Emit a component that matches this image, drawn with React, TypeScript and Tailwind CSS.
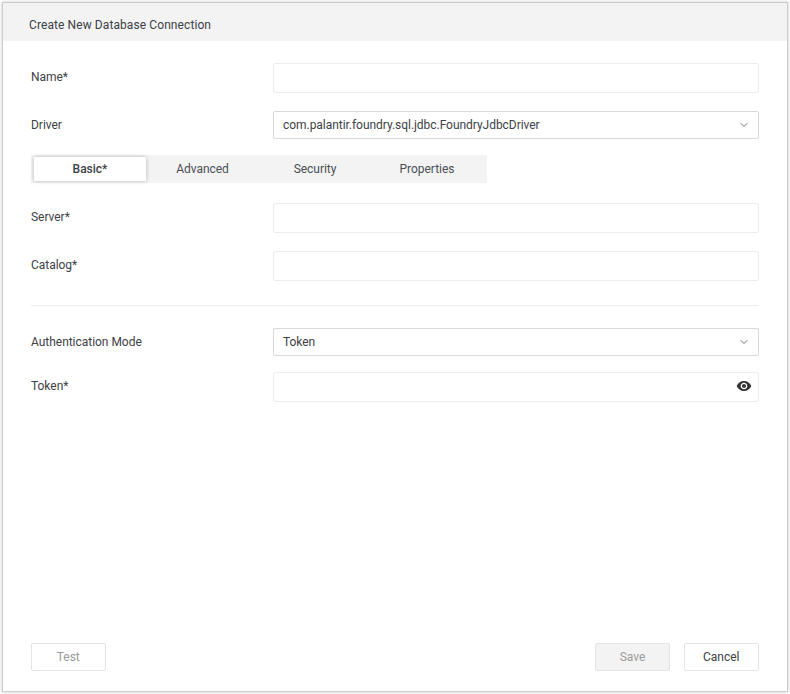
import { ChevronDown } from "lucide-react";

const font = "font-['Roboto','Liberation_Sans',sans-serif]";

function Label({ children, raised = false }: { children: React.ReactNode; raised?: boolean }) {
  return (
    <div className={`w-[242px] shrink-0 text-[12px] leading-[16px] tracking-[-0.03px] text-[#3c4146] ${raised ? "pb-[2px]" : ""}`}>
      {children}
    </div>
  );
}

function TextRow({ label, className = "", icon = false }: { label: string; className?: string; icon?: boolean }) {
  return (
    <div className={`flex items-center ${className}`}>
      <Label raised>{label}</Label>
      <div className="flex h-[30px] flex-1 items-center justify-end rounded-[2px] border border-[#ececec] bg-white pb-[2px] pr-[6px]">
        {icon && (
          <svg width="16" height="16" viewBox="0 0 24 24" fill="#333">
            <path d="M12 4.5C7 4.5 2.73 7.61 1 12c1.73 4.39 6 7.5 11 7.5s9.27-3.11 11-7.5c-1.73-4.39-6-7.5-11-7.5zM12 17c-2.76 0-5-2.24-5-5s2.24-5 5-5 5 2.24 5 5-2.24 5-5 5zm0-8c-1.66 0-3 1.34-3 3s1.34 3 3 3 3-1.34 3-3-1.34-3-3-3z" />
          </svg>
        )}
      </div>
    </div>
  );
}

function SelectRow({ label, value, className = "" }: { label: string; value: string; className?: string }) {
  return (
    <div className={`flex items-center ${className}`}>
      <Label>{label}</Label>
      <div className="flex h-[28px] flex-1 items-center justify-between rounded-[2px] border border-[#d9d9d9] bg-white pl-[9px] pr-[8px] text-[12px] tracking-[-0.04px] text-[#3c4146]">
        <span>{value}</span>
        <ChevronDown size={12} strokeWidth={2} className="text-[#6f6f6f]" />
      </div>
    </div>
  );
}

function Tab({ children, active = false, wide = false }: { children: React.ReactNode; active?: boolean; wide?: boolean }) {
  return (
    <div
      className={
        active
          ? "flex h-[24px] w-[112px] items-center justify-center rounded-[1px] bg-white text-[12px] font-medium text-[#3c4146] shadow-[0_0_4px_rgba(0,0,0,0.25)]"
          : `flex h-[24px] ${wide ? "w-[113px]" : "w-[112px]"} items-center justify-center text-[12px] tracking-[-0.03px] text-[#4a4f55]`
      }
    >
      {children}
    </div>
  );
}

export default function App() {
  return (
    <div className={`h-[694px] w-[790px] bg-[#fdfdfd] pl-[3px] pt-[3px] ${font}`}>
      <div className="flex h-[688px] w-[784px] flex-col bg-white shadow-[0_0_0_1px_#cccccc,0_0_3px_1px_rgba(0,0,0,0.2)]">
        <div className="flex h-[38px] shrink-0 items-center bg-[#f3f3f3] pl-[26px] pt-[5px] text-[12px] tracking-[0.09px] text-[#3c4146]">
          Create New Database Connection
        </div>
        <div className="flex flex-1 flex-col pl-[28px] pr-[28.5px]">
          <TextRow label="Name*" className="mt-[22px]" />
          <SelectRow label="Driver" value="com.palantir.foundry.sql.jdbc.FoundryJdbcDriver" className="mt-[18px]" />
          <div className="mt-[16px] flex h-[28px] w-[456px] items-center bg-[#f3f3f3] pl-[3px]">
            <Tab active>Basic*</Tab>
            <Tab wide>Advanced</Tab>
            <Tab>Security</Tab>
            <Tab>Properties</Tab>
          </div>
          <TextRow label="Server*" className="mt-[20px]" />
          <TextRow label="Catalog*" className="mt-[18px]" />
          <div className="mt-[24px] h-px bg-[#ececec]" />
          <SelectRow label="Authentication Mode" value="Token" className="mt-[22px]" />
          <TextRow label="Token*" className="mt-[16px]" icon />
          <div className="mb-[20px] mt-auto flex items-center text-[12px]">
            <div className="flex h-[28px] w-[74.5px] items-center justify-center rounded-[2px] border border-[#e3e3e3] bg-white text-[#9b9b9b]">Test</div>
            <div className="ml-auto flex h-[28px] w-[75px] items-center justify-center rounded-[2px] border border-[#e3e3e3] bg-[#f3f3f3] text-[#9b9b9b]">Save</div>
            <div className="ml-[14px] flex h-[28px] w-[74.5px] items-center justify-center rounded-[2px] border border-[#e3e3e3] bg-white text-[#3c4146]">Cancel</div>
          </div>
        </div>
      </div>
    </div>
  );
}
